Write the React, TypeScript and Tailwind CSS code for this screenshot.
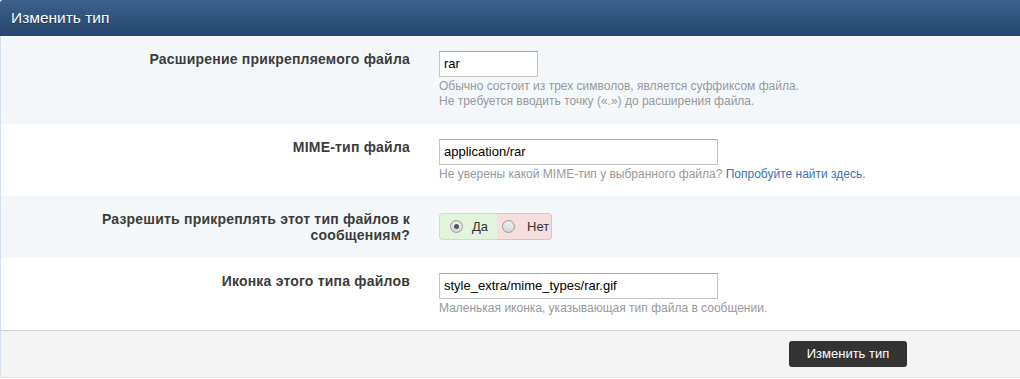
import React from "react";

function Radio({ checked }: { checked?: boolean }) {
  return (
    <span className="relative inline-flex h-[13px] w-[13px] items-center justify-center rounded-full border border-[#9a9a9a] bg-gradient-to-b from-[#f4f4f4] to-[#d6d6d6] shadow-[inset_0_1px_1px_rgba(0,0,0,0.08)]">
      {checked && <span className="h-[5px] w-[5px] rounded-full bg-[#555]" />}
    </span>
  );
}

function Row({
  label,
  bg,
  pb,
  children,
}: {
  label: React.ReactNode;
  bg: string;
  pb: string;
  children: React.ReactNode;
}) {
  return (
    <div className={`flex pt-[15px] ${pb} ${bg}`}>
      <div className="w-[409px] shrink-0 text-right text-[14px] font-bold leading-4 tracking-[0.2px] text-[#3c3c3c]">
        {label}
      </div>
      <div className="ml-[29px] flex flex-col">{children}</div>
    </div>
  );
}

function TextInput({ value, width }: { value: string; width: string }) {
  return (
    <div
      className={`${width} h-[26px] border border-[#c4c4c4] border-t-[#a9a9a9] bg-white pl-[4px] text-[13px] leading-[24px] text-black`}
    >
      {value}
    </div>
  );
}

function Help({ children }: { children: React.ReactNode }) {
  return <div className="mt-[2px] text-[12px] leading-[15px] text-[#999]">{children}</div>;
}

export default function App() {
  return (
    <div
      className="w-[1020px] bg-white"
      style={{ fontFamily: '"Liberation Sans", Arial, sans-serif' }}
    >
      <div className="flex h-[36px] items-center rounded-tl-[3px] bg-gradient-to-b from-[#3c618c] to-[#25466e] pl-[11px] text-[15.5px] text-white [text-shadow:0_1px_1px_rgba(0,0,0,0.35)]">
        Изменить тип
      </div>
      <div className="border-l border-[#d3e1ef]">
        <Row label="Расширение прикрепляемого файла" bg="bg-[#f4f8fb]" pb="pb-[15px]">
          <TextInput value="rar" width="w-[99px]" />
          <Help>
            <div>Обычно состоит из трех символов, является суффиксом файла.</div>
            <div>Не требуется вводить точку («.») до расширения файла.</div>
          </Help>
        </Row>
        <Row label="MIME-тип файла" bg="bg-white" pb="pb-[14px]">
          <TextInput value="application/rar" width="w-[279px]" />
          <Help>
            Не уверены какой MIME-тип у выбранного файла?{" "}
            <span className="text-[#3a73b8]">Попробуйте найти здесь.</span>
          </Help>
        </Row>
        <Row
          label={
            <>
              Разрешить прикреплять этот тип файлов к
              <br />
              сообщениям?
            </>
          }
          bg="bg-[#f4f8fb]"
          pb="pb-[15px]"
        >
          <div className="mt-[2px] flex h-[27px] text-[13px] text-[#333]">
            <div className="flex w-[58px] items-center rounded-l-[4px] border border-r-0 border-[#c5e6bd] bg-[#e2f5dc] pl-[10px]">
              <Radio checked />
              <span className="ml-[9px]">Да</span>
            </div>
            <div className="flex w-[55px] items-center rounded-r-[4px] border border-l-0 border-[#ecbcbc] bg-[#f8dfdf] pl-[5px]">
              <Radio />
              <span className="ml-[12px]">Нет</span>
            </div>
          </div>
        </Row>
        <Row label="Иконка этого типа файлов" bg="bg-white" pb="pb-[14px]">
          <TextInput value="style_extra/mime_types/rar.gif" width="w-[279px]" />
          <Help>Маленькая иконка, указывающая тип файла в сообщении.</Help>
        </Row>
        <div className="flex border-t border-b border-t-[#d5d5d5] border-b-[#d8e4f0] bg-[#f4f4f4] pt-[10px] pb-[10px] pl-[788px]">
          <div className="flex h-[26px] w-[118px] items-center justify-center rounded-[3px] bg-[#333] text-[13px] text-white">
            Изменить тип
          </div>
        </div>
      </div>
    </div>
  );
}
